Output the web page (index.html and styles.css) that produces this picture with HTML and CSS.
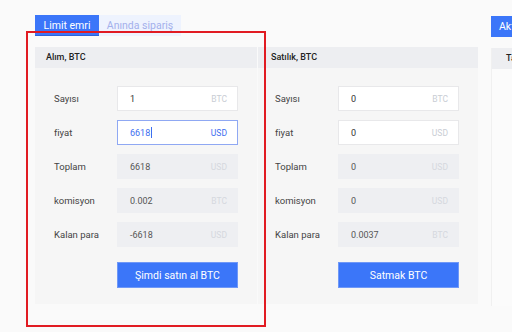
FILE: index.html
```html
<!DOCTYPE html>
<html lang="tr">
<head>
  <meta charset="UTF-8">
  <meta name="viewport" content="width=device-width, initial-scale=1.0">
  <title>Alım satım</title>
  <link rel="stylesheet" href="styles.css">
</head>
<body>

  <div class="page">
    <div class="trade-col">
      <div class="tabs">
        <button class="tab active">Limit emri</button>
        <button class="tab wide">Anında sipariş</button>
      </div>

      <div class="panels">
        <!-- alım -->
        <div class="panel buy">
          <div class="panel-head">Alım, BTC</div>
          <div class="panel-body">
            <div class="row">
              <span class="label">Sayısı</span>
              <div class="field"><span class="val">1</span><span class="unit">BTC</span></div>
            </div>
            <div class="row">
              <span class="label">fiyat</span>
              <div class="field focus"><span class="val">6618<i class="caret"></i></span><span class="unit">USD</span></div>
            </div>
            <div class="row">
              <span class="label">Toplam</span>
              <div class="field off"><span class="val">6618</span><span class="unit">USD</span></div>
            </div>
            <div class="row">
              <span class="label">komisyon</span>
              <div class="field off"><span class="val">0.002</span><span class="unit">BTC</span></div>
            </div>
            <div class="row">
              <span class="label">Kalan para</span>
              <div class="field off"><span class="val">-6618</span><span class="unit">USD</span></div>
            </div>
            <div class="row">
              <span class="label"></span>
              <button class="submit">Şimdi satın al BTC</button>
            </div>
          </div>
        </div>

        <!-- satış -->
        <div class="panel sell">
          <div class="panel-head">Satılık, BTC</div>
          <div class="panel-body">
            <div class="row">
              <span class="label">Sayısı</span>
              <div class="field"><span class="val">0</span><span class="unit">BTC</span></div>
            </div>
            <div class="row">
              <span class="label">fiyat</span>
              <div class="field"><span class="val">0</span><span class="unit">USD</span></div>
            </div>
            <div class="row">
              <span class="label">Toplam</span>
              <div class="field off"><span class="val">0</span><span class="unit">USD</span></div>
            </div>
            <div class="row">
              <span class="label">komisyon</span>
              <div class="field off"><span class="val">0</span><span class="unit">USD</span></div>
            </div>
            <div class="row">
              <span class="label">Kalan para</span>
              <div class="field off"><span class="val">0.0037</span><span class="unit">BTC</span></div>
            </div>
            <div class="row">
              <span class="label"></span>
              <button class="submit">Satmak BTC</button>
            </div>
          </div>
        </div>
      </div>
    </div>

    <div class="side-col">
      <button class="side-btn">Aktif emirler</button>
      <div class="side-panel">
        <div class="panel-head">Tarih</div>
      </div>
    </div>
  </div>

  <!-- vurgulama çerçevesi -->
  <div class="highlight"></div>

</body>
</html>
```

FILE: styles.css
```css
body {
  font-family: Roboto, "Noto Sans", Arial, sans-serif;
  background-color: #fafafa;
  margin: 0;
  padding: 0;
  color: #333;
  overflow: hidden;
}

.page {
  display: flex;
  gap: 13px;
  padding: 15px 0 0 35px;
  width: 700px;
}

.tabs {
  display: flex;
  height: 21px;
  margin-bottom: 11px;
}

.tab {
  border: none;
  font-family: inherit;
  font-size: 10.5px;
  width: 64px;
  padding: 0;
  height: 21px;
  background-color: #eef3fe;
  color: #a3b0ec;
  cursor: pointer;
}

.tab.wide {
  width: 82px;
}

.tab.active {
  background-color: #3b76f9;
  color: #fff;
  border-bottom: 1px solid #2f62d8;
}

.panels {
  display: flex;
  gap: 1px;
}

.panel {
  width: 222px;
  background-color: #f6f6f6;
}

.panel.sell {
  width: 220px;
}

.panel-head {
  height: 21px;
  line-height: 21px;
  background-color: #edeef1;
  font-size: 9px;
  font-weight: 500;
  color: #222;
  padding-left: 11px;
}

.sell .panel-head {
  padding-left: 13px;
}

.panel-body {
  padding: 18px 0 16px 19px;
  display: flex;
  flex-direction: column;
  gap: 9px;
}

.sell .panel-body {
  padding-left: 17px;
}

.row {
  display: flex;
  align-items: center;
}

.row:last-child {
  margin-top: 6px;
}

.label {
  width: 63px;
  font-size: 9.5px;
  color: #444;
}

.field {
  width: 121px;
  height: 25px;
  box-sizing: border-box;
  display: flex;
  align-items: center;
  justify-content: space-between;
  padding: 0 10px 0 12px;
  background-color: #fff;
  border: 1px solid #e8e8ea;
  font-size: 9px;
}

.field .val {
  color: #333;
  display: flex;
  align-items: center;
}

.field .unit {
  color: #c9cdd4;
  font-size: 8.5px;
}

.field.focus {
  border-color: #8fa8f3;
}

.field.focus .val,
.field.focus .unit {
  color: #3d6ef0;
}

.caret {
  display: inline-block;
  width: 1px;
  height: 11px;
  background-color: #3d6ef0;
  margin-left: 1px;
}

.field.off {
  background-color: #eeeff2;
  border-color: #eeeff2;
}

.field.off .val {
  color: #555;
}

.field.off .unit {
  color: #d5d8de;
}

.submit {
  width: 121px;
  height: 26px;
  border: 1px solid #6f98f7;
  background-color: #3b76f9;
  color: #fff;
  font-family: inherit;
  font-size: 10.5px;
  cursor: pointer;
}

.side-col {
  width: 160px;
}

.side-btn {
  height: 21px;
  border: none;
  background-color: #3b76f9;
  color: #fff;
  font-family: inherit;
  font-size: 10.5px;
  padding: 0 8px;
  margin-bottom: 11px;
}

.side-panel {
  height: 258px;
  background-color: #fbfbfb;
  border-left: 1px solid #f0f0f0;
}

.side-panel .panel-head {
  padding-left: 14px;
}

.highlight {
  position: absolute;
  left: 26px;
  top: 31px;
  width: 236px;
  height: 292px;
  border: 2px solid #e11b22;
  pointer-events: none;
}
```
